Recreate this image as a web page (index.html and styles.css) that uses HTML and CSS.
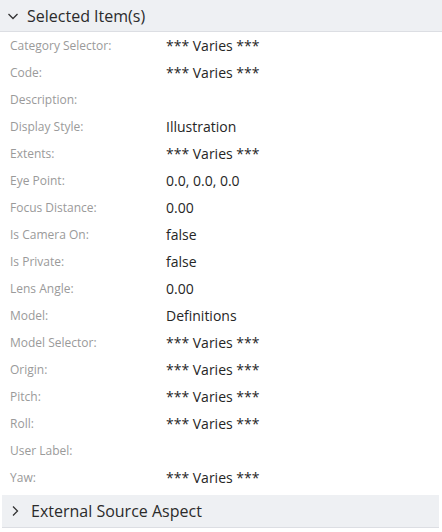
FILE: index.html
```html
<!DOCTYPE html>
<html>
<head>
<meta charset="utf-8">
<link rel="stylesheet" href="styles.css">
</head>
<body>
<div class="panel">
  <div class="header">
    <svg class="chev" width="12" height="12" viewBox="0 0 12 12"><path d="M1.5 4 L6 8.5 L10.5 4" fill="none" stroke="#333" stroke-width="1.3"/></svg>
    <span class="title">Selected Item(s)</span>
  </div>
  <div class="rows">
    <div class="row"><span class="label">Category Selector:</span><span class="value">*** Varies ***</span></div>
    <div class="row"><span class="label">Code:</span><span class="value">*** Varies ***</span></div>
    <div class="row"><span class="label">Description:</span><span class="value"></span></div>
    <div class="row"><span class="label">Display Style:</span><span class="value">Illustration</span></div>
    <div class="row"><span class="label">Extents:</span><span class="value">*** Varies ***</span></div>
    <div class="row"><span class="label">Eye Point:</span><span class="value">0.0, 0.0, 0.0</span></div>
    <div class="row"><span class="label">Focus Distance:</span><span class="value">0.00</span></div>
    <div class="row"><span class="label">Is Camera On:</span><span class="value">false</span></div>
    <div class="row"><span class="label">Is Private:</span><span class="value">false</span></div>
    <div class="row"><span class="label">Lens Angle:</span><span class="value">0.00</span></div>
    <div class="row"><span class="label">Model:</span><span class="value">Definitions</span></div>
    <div class="row"><span class="label">Model Selector:</span><span class="value">*** Varies ***</span></div>
    <div class="row"><span class="label">Origin:</span><span class="value">*** Varies ***</span></div>
    <div class="row"><span class="label">Pitch:</span><span class="value">*** Varies ***</span></div>
    <div class="row"><span class="label">Roll:</span><span class="value">*** Varies ***</span></div>
    <div class="row"><span class="label">User Label:</span><span class="value"></span></div>
    <div class="row"><span class="label">Yaw:</span><span class="value">*** Varies ***</span></div>
  </div>
  <div class="header header-bottom">
    <svg class="chev" width="12" height="12" viewBox="0 0 12 12"><path d="M4 1.5 L8.5 6 L4 10.5" fill="none" stroke="#333" stroke-width="1.3"/></svg>
    <span class="title">External Source Aspect</span>
  </div>
</div>
</body>
</html>
```
FILE: styles.css
```css
html, body {
  margin: 0;
  padding: 0;
  background: #fff;
}
body {
  font-family: "Open Sans", "Noto Sans", sans-serif;
  color: #333;
  width: 442px;
  height: 532px;
  overflow: hidden;
}
.panel {
  display: flex;
  flex-direction: column;
}
.header {
  height: 31px;
  background: #eef0f3;
  border-bottom: 1px solid #dcdee3;
  display: flex;
  align-items: center;
  gap: 8px;
  padding-left: 7px;
}
.header-bottom {
  margin-top: 4px;
  margin-left: 2px;
  margin-right: 3px;
  padding-left: 7px;
  gap: 10px;
  height: 32px;
}
.chev {
  flex: none;
}
.title {
  font-size: 16px;
  color: #2b2b2b;
}
.rows {
  display: flex;
  flex-direction: column;
}
.row {
  height: 27px;
  display: grid;
  grid-template-columns: 156px 1fr;
  align-items: center;
  padding-left: 10px;
}
.label {
  font-size: 12px;
  color: #9a9a9a;
}
.value {
  font-size: 14px;
  color: #262626;
}
```
